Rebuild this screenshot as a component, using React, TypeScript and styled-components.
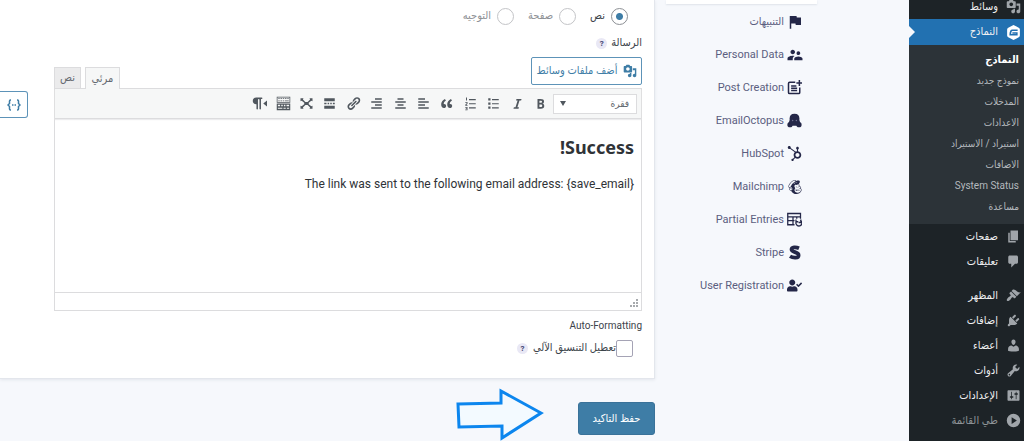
import React from 'react';
import styled, { createGlobalStyle, css } from 'styled-components';
import { MdFlag, MdSupervisorAccount } from 'react-icons/md';
import { FaHubspot, FaMailchimp, FaUserCheck } from 'react-icons/fa';

const Global = createGlobalStyle`
  * { box-sizing: border-box; }
  body {
    margin: 0;
    background: #f6f8fc;
    color: #3c434a;
    font-family: Roboto, 'DejaVu Sans Condensed', 'DejaVu Sans', sans-serif;
    font-size: 11px;
    line-height: 16px;
    overflow: hidden;
  }
  button, select, input { font: inherit; color: inherit; margin: 0; }
  ul { list-style: none; margin: 0; padding: 0; }
`;

const Page = styled.div`
  display: flex;
  align-items: stretch;
  min-height: 100vh;
  overflow: hidden;
`;

/* ---------- admin menu ---------- */
const AdminMenu = styled.nav`
  flex: 0 0 115px;
  background: #1d2327;
`;
const MenuList = styled.ul`
  margin-top: -6px;
`;
const MenuLink = styled.a<{ $active?: boolean; $muted?: boolean }>`
  position: relative;
  display: flex;
  align-items: center;
  gap: 8px;
  height: 25px;
  padding-right: 3px;
  color: ${p => (p.$muted ? '#8f9498' : '#f0f0f1')};
  text-decoration: none;
  svg { color: #a0a5aa; }
  ${p => p.$active && css`
    height: 26px;
    background: #2271b1;
    svg { color: #fff; }
    &::after {
      content: '';
      position: absolute;
      left: 0;
      top: 7px;
      border: 6px solid transparent;
      border-left-color: #f6f8fc;
      border-right-width: 0;
    }
  `}
`;
const Separator = styled.li`
  height: 9px;
`;
const SubMenu = styled.ul`
  background: #2c3338;
  padding: 4px 0 7px;
`;
const SubLink = styled.a<{ $current?: boolean }>`
  display: flex;
  align-items: center;
  height: 21px;
  padding-right: 5px;
  color: ${p => (p.$current ? '#fff' : '#b4b9be')};
  font-size: ${p => (p.$current ? '11px' : '10px')};
  font-weight: ${p => (p.$current ? 700 : 400)};
  text-decoration: none;
`;

/* ---------- settings tabs ---------- */
const Settings = styled.aside`
  flex: 0 0 254px;
  padding: 0 92px 0 11px;
`;
const SettingsPanel = styled.div`
  height: 4px;
  margin-bottom: 1px;
  background: #fff;
  box-shadow: 0 1px 2px #dfe3ea;
`;
const SettingsLink = styled.a`
  display: flex;
  align-items: center;
  gap: 3px;
  height: 33px;
  padding-right: 15px;
  color: #5b5e80;
  font-size: 11px;
  text-decoration: none;
  white-space: nowrap;
`;
const SettingsIcon = styled.span`
  display: flex;
  align-items: center;
  justify-content: center;
  width: 15px;
  height: 18px;
  color: #242748;
  svg { flex: none; }
`;

/* ---------- content ---------- */
const Content = styled.main`
  flex: 1;
  min-width: 0;
`;
const Card = styled.section`
  padding: 7px 12px 21px 0;
  background: #fff;
  border: solid #e3e6ec;
  border-width: 0 1px 1px 0;
  box-shadow: 0 1px 3px #e3e6ec;
`;
const RadioRow = styled.div`
  display: flex;
  align-items: center;
  gap: 14px;
  height: 18px;
  padding-right: 14px;
`;
const RadioLabel = styled.label<{ $on?: boolean }>`
  display: flex;
  align-items: center;
  gap: 6px;
  color: ${p => (p.$on ? '#3c434a' : '#8e9196')};
`;
const Radio = styled.input`
  appearance: none;
  width: 17px;
  height: 17px;
  border: 1px solid #c3c4c7;
  border-radius: 50%;
  background: #fff;
  &:checked {
    border-color: #8c8f94;
    background: radial-gradient(circle, #3e7da6 3px, #fff 4px);
  }
`;
const FieldTitle = styled.div`
  display: flex;
  align-items: center;
  gap: 4px;
  height: 16px;
  margin-top: 10px;
`;
const Help = styled.button`
  width: 11px;
  height: 11px;
  padding: 0;
  border: 0;
  border-radius: 50%;
  background: #e9e8f5;
  color: #3f4270;
  font-size: 8px;
  font-weight: 700;
  line-height: 11px;
`;
const EditorRow = styled.div`
  display: flex;
  align-items: flex-start;
  gap: 26px;
  margin-top: 6px;
`;
const EditorWrap = styled.div`
  flex: 1;
  min-width: 0;
`;
const EditorTop = styled.div`
  display: flex;
  justify-content: space-between;
  align-items: flex-end;
  height: 31px;
`;
const MediaButton = styled.button`
  display: flex;
  align-items: center;
  justify-content: center;
  gap: 5px;
  width: 111px;
  height: 28px;
  margin-bottom: 3px;
  padding: 0;
  border: 1px solid #5d93b8;
  border-radius: 2px;
  background: #fff;
  color: #3e7da6;
  white-space: nowrap;
`;
const Tabs = styled.div`
  display: flex;
  gap: 4px;
`;
const Tab = styled.button<{ $on?: boolean; $width: number }>`
  position: relative;
  width: ${p => p.$width}px;
  height: ${p => (p.$on ? 22 : 21)}px;
  margin-bottom: ${p => (p.$on ? -1 : 0)}px;
  padding: 0;
  border: 1px solid #dcdcde;
  border-bottom: 0;
  background: ${p => (p.$on ? '#f6f7f7' : '#ebebec')};
  color: #646970;
`;
const Editor = styled.div`
  border: 1px solid #dcdcde;
`;
const Toolbar = styled.div`
  display: flex;
  align-items: center;
  height: 30px;
  padding-right: 4px;
  border-bottom: 1px solid #dcdcde;
  background: #f6f7f7;
  box-shadow: 0 1px 1px #ececee;
`;
const FormatBox = styled.div`
  position: relative;
  width: 84px;
  height: 20px;
  margin-left: 1px;
  svg { position: absolute; left: 7px; top: 7px; }
`;
const FormatSelect = styled.select`
  appearance: none;
  width: 100%;
  height: 100%;
  padding: 0 7px;
  border: 1px solid #dcdcde;
  border-radius: 0;
  background: #fff;
  color: #646970;
  font-size: 10px;
`;
const ToolGroup = styled.div`
  display: flex;
  justify-content: space-between;
  width: 304px;
`;
const ToolButton = styled.button`
  display: grid;
  place-items: center;
  width: 23px;
  height: 23px;
  padding: 0;
  border: 0;
  background: none;
  color: #50575e;
`;
const Body = styled.div`
  min-height: 173px;
  padding: 16px 7px;
  color: #2f3337;
  h2 {
    margin: 0;
    font-family: 'Noto Sans', 'DejaVu Sans Condensed', sans-serif;
    font-size: 18px;
    line-height: 24px;
  }
  p { margin: 16px 0 0; font-size: 12px; line-height: 18px; text-align: right; }
`;
const StatusBar = styled.div`
  display: flex;
  justify-content: flex-end;
  align-items: flex-end;
  height: 18px;
  padding: 2px;
  border-top: 1px solid #dcdcde;
  direction: ltr;
`;
const MergeButton = styled.button`
  display: grid;
  place-items: center;
  width: 28px;
  height: 27px;
  margin-top: 34px;
  padding: 0;
  border: 1px solid #5d93b8;
  border-left: 0;
  border-radius: 0 3px 3px 0;
  background: #fff;
  color: #3e7da6;
`;
const FormatTitle = styled.div`
  margin-top: 7px;
  font-size: 10px;
`;
const CheckRow = styled.div`
  display: flex;
  align-items: center;
  gap: 5px;
  height: 18px;
  margin-top: 5px;
  padding-right: 9px;
`;
const CheckLabel = styled.label`
  display: flex;
  align-items: center;
`;
const CheckBox = styled.input`
  appearance: none;
  width: 17px;
  height: 17px;
  border: 1px solid #a5a3b5;
  border-radius: 2px;
  background: #fff;
`;
const Actions = styled.div`
  display: flex;
  align-items: flex-start;
  gap: 34px;
  padding-top: 9px;
`;
const Save = styled.button`
  width: 77px;
  height: 33px;
  margin-top: 14px;
  padding: 0;
  border: 1px solid #3a7299;
  border-radius: 3px;
  background: #3e7da6;
  color: #fff;
`;

/* ---------- icons ---------- */
const Dash = ({ d, size = 14 }: { d: string; size?: number }) => (
  <svg width={size} height={size} viewBox="0 0 20 20" fill="currentColor" fillRule="evenodd" aria-hidden="true">
    <path d={d} />
  </svg>
);

const icons = {
  media: 'M13 11V4c0-.55-.45-1-1-1h-1.67L9 1H5L3.67 3H2c-.55 0-1 .45-1 1v7c0 .55.45 1 1 1h10c.55 0 1-.45 1-1zM7 4.5c1.38 0 2.5 1.12 2.5 2.5S8.38 9.5 7 9.5 4.5 8.38 4.5 7 5.62 4.5 7 4.5zM14 6h5v10.5c0 1.38-1.12 2.5-2.5 2.5S14 17.88 14 16.5s1.12-2.5 2.5-2.5c.17 0 .34.02.5.05V9h-3V6zm-4 8.05V13h2v3.5c0 1.38-1.12 2.5-2.5 2.5S7 17.88 7 16.5 8.12 14 9.5 14c.17 0 .34.02.5.05z',
  form: 'M10 0l7 3.6q1.500.8 1.500 2.400v8q0 1.600-1.500 2.400L10 20l-7-3.600q-1.500-.8-1.500-2.400V6q0-1.600 1.500-2.400zM8.500 6Q6.500 6 5.600 7.500 4.500 9.500 4.500 14H15.500V9.500H8.500v2H13.500V12H6.800Q7 8 8.500 8H15.500V6z',
  pages: 'M6 15V2h10v13H6zm-1 1h8v2H3V5h2v11z',
  comments: 'M5 2h9c1.100 0 2 .9 2 2v7c0 1.100-.9 2-2 2h-2l-5 5v-5H5c-1.100 0-2-.9-2-2V4c0-1.100.9-2 2-2z',
  appearance: 'M14.480 11.060L7.410 3.990l1.500-1.500c.5-.56 2.300-.47 3.510.32 1.210.8 1.430 1.280 2.910 2.100 1.180.64 2.450 1.260 4.450.85zm-.71.71L6.700 4.700 4.930 6.470c-.39.39-.39 1.020 0 1.410l1.060 1.060c.39.39.39 1.030 0 1.420-.6.6-1.430 1.110-2.210 1.690-.35.26-.7.53-1.010.84C1.430 14.230.4 16.080 1.400 17.070c.99 1 2.840-.03 4.180-1.360.31-.31.58-.66.85-1.020.57-.78 1.080-1.610 1.690-2.210.39-.39 1.020-.39 1.410 0l1.060 1.060c.39.39 1.020.39 1.410 0z',
  plugins: 'M13.110 4.360L9.870 7.600 8 5.730l3.240-3.240c.35-.34 1.050-.2 1.560.32.52.51.66 1.210.31 1.550zm-8 1.770l.91-1.120 9.010 9.010-1.190.84c-.71.71-2.630 1.160-3.820 1.160H6.140L4.900 17.260c-.59.59-1.540.59-2.120 0-.59-.58-.59-1.530 0-2.120l1.240-1.240v-3.880c0-1.130.4-3.190 1.090-3.890zm7.260 3.970l3.240-3.240c.34-.35 1.040-.21 1.550.31.52.51.66 1.210.31 1.550l-3.240 3.250z',
  users: 'M10 9.250c-2.270 0-2.730-3.440-2.730-3.440C7 4.020 7.820 2 9.970 2c2.160 0 2.980 2.020 2.710 3.810 0 0-.41 3.440-2.680 3.440zm0 2.570L12.720 10c2.390 0 4.520 2.330 4.520 4.530v2.490s-3.650 1.130-7.240 1.130c-3.650 0-7.240-1.130-7.240-1.130v-2.490c0-2.250 1.940-4.480 4.470-4.480z',
  tools: 'M16.680 9.770c-1.340 1.340-3.300 1.670-4.950.99l-5.410 6.520c-.99.99-2.590.99-3.580 0s-.99-2.590 0-3.570l6.520-5.420c-.68-1.650-.35-3.610.99-4.950 1.280-1.280 3.120-1.620 4.720-1.060l-2.890 2.890 2.820 2.820 2.860-2.870c.53 1.580.18 3.390-1.080 4.650zM3.810 16.210c.4.39 1.040.39 1.430 0 .4-.4.4-1.040 0-1.430-.39-.4-1.030-.4-1.430 0-.39.39-.39 1.030 0 1.430z',
  settings: 'M18 16V4c0-.55-.45-1-1-1H3c-.55 0-1 .45-1 1v12c0 .55.45 1 1 1h14c.55 0 1-.45 1-1zM8 11h1c.55 0 1 .45 1 1s-.45 1-1 1H8v1.500c0 .28-.22.5-.5.5s-.5-.22-.5-.5V13H6c-.55 0-1-.45-1-1s.45-1 1-1h1V5.500c0-.28.22-.5.5-.5s.5.22.5.5V11zm5-2h-1c-.55 0-1-.45-1-1s.45-1 1-1h1V5.500c0-.28.22-.5.5-.5s.5.22.5.5V7h1c.55 0 1 .45 1 1s-.45 1-1 1h-1v5.500c0 .28-.22.5-.5.5s-.5-.22-.5-.5V9z',
  collapse: 'M10 1a9 9 0 1 0 0 18a9 9 0 0 0 0-18zM7.500 5.500L14.500 10L7.500 14.500z',
};

const toolIcons: [string, string][] = [
  ['عريض', 'M6 4v13h4.540c1.370 0 2.460-.33 3.260-1 .8-.66 1.200-1.580 1.200-2.770 0-.84-.17-1.510-.51-2.010s-.9-.85-1.670-1.030v-.09c.57-.1 1.020-.4 1.360-.9s.51-1.130.51-1.910c0-1.140-.39-1.980-1.170-2.500C12.750 4.260 11.500 4 9.780 4H6zm2.570 5.150V6.260h1.360c.73 0 1.270.11 1.610.32.34.22.51.58.51 1.070 0 .54-.16.92-.47 1.150s-.82.35-1.510.35h-1.500zm0 2.190h1.600c1.440 0 2.160.53 2.160 1.610 0 .6-.17 1.050-.51 1.340s-.86.43-1.570.43H8.570v-3.380z'],
  ['مائل', 'M14.780 6h-2.130l-2.800 9h2.120l-.62 2H4.600l.62-2h2.140l2.800-9H8.030l.62-2h6.750z'],
  ['قائمة نقطية', 'M3 3h3v3H3zM8 4h9v1.500H8zM3 8.500h3v3H3zM8 9.500h9V11H8zM3 14h3v3H3zM8 15h9v1.500H8z'],
  ['قائمة رقمية', 'M4 2h1.300v4H4zM3 8h3v2.200L4.500 12H6v1H3v-1.200L5 9.500V9H3zM3 14.500h3V19H3v-1h2v-.8H3.700v-1H5v-.7H3zM8 4h9v1.500H8zM8 9.500h9V11H8zM8 15h9v1.500H8z'],
  ['اقتباس', 'M9.490 13.220c0-.74-.2-1.380-.61-1.900-.62-.78-1.830-.88-2.530-.72-.29-1.650 1.110-3.750 2.920-4.650L7.880 4c-2.730 1.300-5.420 4.280-4.960 8.050C3.210 14.430 4.590 16 6.540 16c.85 0 1.560-.25 2.120-.75s.83-1.180.83-2.030zm8.050 0c0-.74-.2-1.380-.61-1.900-.63-.78-1.830-.88-2.530-.72-.29-1.650 1.110-3.750 2.920-4.650L15.930 4c-2.730 1.300-5.410 4.280-4.950 8.050.29 2.380 1.660 3.950 3.610 3.950.85 0 1.560-.25 2.120-.75s.83-1.180.83-2.030z'],
  ['محاذاة لليسار', 'M12 5V3H3v2h9zm5 4V7H3v2h14zm-5 4v-2H3v2h9zm5 4v-2H3v2h14z'],
  ['توسيط', 'M14 5V3H6v2h8zm3 4V7H3v2h14zm-3 4v-2H6v2h8zm3 4v-2H3v2h14z'],
  ['محاذاة لليمين', 'M17 5V3H8v2h9zm0 4V7H3v2h14zm0 4v-2H8v2h9zm0 4v-2H3v2h14z'],
  ['رابط', 'M17.740 2.760c1.680 1.690 1.680 4.410 0 6.100l-1.530 1.520c-1.120 1.120-2.700 1.470-4.140 1.090l2.620-2.610.76-.77.76-.76c.84-.84.84-2.200 0-3.040-.84-.85-2.200-.85-3.040 0l-.77.76-3.380 3.380c-.37-1.440-.02-3.020 1.100-4.140l1.520-1.530c1.690-1.680 4.420-1.680 6.100 0zM8.590 13.430l5.340-5.340c.42-.42.42-1.100 0-1.520-.44-.43-1.130-.39-1.530 0l-5.330 5.340c-.42.42-.42 1.100 0 1.520.44.43 1.130.39 1.520 0zm-.76 2.290l4.140-4.150c.38 1.440.03 3.020-1.090 4.140l-1.520 1.530c-1.690 1.680-4.410 1.680-6.100 0-1.680-1.680-1.680-4.420 0-6.100l1.530-1.520c1.120-1.120 2.700-1.470 4.140-1.100l-4.140 4.150c-.85.84-.85 2.200 0 3.050.84.84 2.200.84 3.040 0z'],
  ['اقرأ المزيد', 'M17 7V3H3v4h14zM6 11V9H3v2h3zm3.500 0V9h-2v2h2zm3.500 0V9h-2v2h2zm4 0V9h-2.500v2H17zm0 6v-4H3v4h14z'],
  ['ملء الشاشة', 'M2 3h4L5.200 4.600 8.500 8h3L14.800 4.600 14 3h4v4l-1.600-.8L13 9v2l3.400 2.800L18 13v4h-4l.8-1.600L11.500 12h-3l-3.300 3.400L6 17H2v-4l1.600.8L7 11V9L3.600 6.200 2 7z'],
  ['شريط الأدوات', 'M1 1h18v8H1zM2 2v6h16V2zM3 3h2v1H3zm3 0h2v1H6zm3 0h2v1H9zm3 0h2v1h-2zm3 0h2v1h-2zM3 6h2v1H3zm3 0h2v1H6zm3 0h2v1H9zm3 0h5v1h-5zM1 10h18v9H1zM2.500 11.500v2h3v-2zm4.500 0v2h2v-2zm3.500 0v2h2v-2zm3.500 0v2h3.500v-2zM2.500 15.500v1.500h6v-1.500zm7.500 0v1.500h3v-1.500zm4.500 0v1.500h3v-1.500z'],
  ['اتجاه النص', 'M5.520 2h7.430c.55 0 1 .45 1 1s-.45 1-1 1h-1v13c0 .55-.45 1-1 1s-1-.45-1-1V5c0-.55-.45-1-1-1s-1 .45-1 1v12c0 .55-.45 1-1 1s-1-.45-1-1v-5.960h-.43C3.020 11.040 1 9.020 1 6.520S3.020 2 5.520 2zM20 6l-5 4 5 4V6z'],
];

const PostIcon = () => (
  <svg width="15" height="15" viewBox="0 0 20 20" fill="none" stroke="currentColor" strokeWidth="2" aria-hidden="true">
    <path d="M11 3H3.500Q2 3 2 4.500v12Q2 18 3.500 18h12q1.500 0 1.500-1.500V10" />
    <path d="M5.500 8h7M5.500 11h8M5.500 14h8M16.500 0v8M12.500 4h8" />
  </svg>
);
const OctopusIcon = () => (
  <svg width="15" height="15" viewBox="0 0 20 20" fill="currentColor" aria-hidden="true">
    <path d="M10 1C5.500 1 3.500 3.500 3.500 7v5h13V7c0-3.500-2-6-6.500-6z" />
    <path d="M3.500 10h13l1.500 4H2z" />
    <circle cx="4" cy="15.500" r="3.500" /><circle cx="16" cy="15.500" r="3.500" />
    <path d="M6 12h8v5H6z" />
    <circle cx="7.500" cy="10" r="1" fill="#6f7190" /><circle cx="12.500" cy="10" r="1" fill="#6f7190" />
  </svg>
);
const EntriesIcon = () => (
  <svg width="15" height="15" viewBox="0 0 20 20" fill="none" stroke="currentColor" strokeWidth="1.700" aria-hidden="true">
    <path d="M10 17H1V2h17v7M1 6.500h17M1 11.500h9M8 6.500V17M13 6.500V9M17.500 11a4 4 0 1 1-5 1.500M12 10v3h3M18.500 10v4h-3" />
  </svg>
);
const StripeIcon = () => (
  <svg width="15" height="15" viewBox="0 0 20 20" fill="none" stroke="currentColor" strokeWidth="5" aria-hidden="true">
    <path d="M16 4.200C12 2.500 6 2.300 6 6c0 4 9.500 3 9.500 7.500 0 4.500-7.500 4-11.500 1.500" />
  </svg>
);
const MergeIcon = () => (
  <svg width="14" height="12" viewBox="0 0 14 12" fill="none" stroke="currentColor" strokeWidth="1.500" aria-hidden="true">
    <path d="M4 1H3.500Q2.500 1 2.500 2v2.500L1 6l1.500 1.500V10q0 1 1 1H4M10 1h.5q1 0 1 1v2.500L13 6l-1.500 1.500V10q0 1-1 1H10M5 6h1.500M7.500 6H9" />
  </svg>
);

const before: [string, string][] = [['وسائط', icons.media]];
const contentMenu: [string, string][] = [['صفحات', icons.pages], ['تعليقات', icons.comments]];
const siteMenu: [string, string][] = [
  ['المظهر', icons.appearance], ['إضافات', icons.plugins], ['أعضاء', icons.users],
  ['أدوات', icons.tools], ['الإعدادات', icons.settings],
];
const subMenu = ['النماذج', 'نموذج جديد', 'المدخلات', 'الاعدادات', 'استيراد / الاستيراد', 'الاضافات', 'System Status', 'مساعدة'];

const settings: [string, React.ReactNode][] = [
  ['التنبيهات', <MdFlag size={18} />],
  ['Personal Data', <MdSupervisorAccount size={18} />],
  ['Post Creation', <PostIcon />],
  ['EmailOctopus', <OctopusIcon />],
  ['HubSpot', <FaHubspot size={15} />],
  ['Mailchimp', <FaMailchimp size={16} />],
  ['Partial Entries', <EntriesIcon />],
  ['Stripe', <StripeIcon />],
  ['User Registration', <FaUserCheck size={15} />],
];

const MenuItems = ({ items }: { items: [string, string][] }) => (
  <>
    {items.map(([label, d]) => (
      <li key={label}><MenuLink href="#"><Dash d={d} size={15} />{label}</MenuLink></li>
    ))}
  </>
);

export default function App() {
  return (
    <>
      <Global />
      <Page dir="rtl" lang="ar">
        <AdminMenu>
          <MenuList>
            <MenuItems items={before} />
            <li>
              <MenuLink href="#" $active><Dash d={icons.form} size={15} />النماذج</MenuLink>
              <SubMenu>
                {subMenu.map((label, i) => (
                  <li key={label}><SubLink href="#" $current={i === 0}>{label}</SubLink></li>
                ))}
              </SubMenu>
            </li>
            <MenuItems items={contentMenu} />
            <Separator />
            <MenuItems items={siteMenu} />
            <li><MenuLink href="#" $muted><Dash d={icons.collapse} size={15} />طي القائمة</MenuLink></li>
          </MenuList>
        </AdminMenu>

        <Settings>
          <SettingsPanel />
          {settings.map(([label, icon]) => (
            <SettingsLink href="#" key={label}><SettingsIcon>{icon}</SettingsIcon>{label}</SettingsLink>
          ))}
        </Settings>

        <Content>
          <Card>
            <RadioRow>
              <RadioLabel $on><Radio type="radio" name="type" defaultChecked />نص</RadioLabel>
              <RadioLabel><Radio type="radio" name="type" />صفحة</RadioLabel>
              <RadioLabel><Radio type="radio" name="type" />التوجيه</RadioLabel>
            </RadioRow>
            <FieldTitle>الرسالة <Help type="button">?</Help></FieldTitle>
            <EditorRow>
              <EditorWrap>
                <EditorTop>
                  <MediaButton type="button"><Dash d={icons.media} />أضف ملفات وسائط</MediaButton>
                  <Tabs>
                    <Tab type="button" $on $width={35}>مرئي</Tab>
                    <Tab type="button" $width={27}>نص</Tab>
                  </Tabs>
                </EditorTop>
                <Editor>
                  <Toolbar>
                    <FormatBox>
                      <FormatSelect aria-label="تنسيق"><option>فقرة</option></FormatSelect>
                      <svg width="6" height="5" viewBox="0 0 6 5" aria-hidden="true"><path d="M0 0h6L3 5z" fill="#50575e" /></svg>
                    </FormatBox>
                    <ToolGroup>
                      {toolIcons.map(([label, d]) => (
                        <ToolButton type="button" key={label} aria-label={label}><Dash d={d} size={15} /></ToolButton>
                      ))}
                    </ToolGroup>
                  </Toolbar>
                  <Body>
                    <h2>Success!</h2>
                    <p dir="ltr">The link was sent to the following email address: {'{save_email}'}</p>
                  </Body>
                  <StatusBar>
                    <svg width="9" height="9" viewBox="0 0 9 9" fill="#a7aaad" aria-hidden="true">
                      <path d="M6 0h2v2H6zM3 3h2v2H3zM6 3h2v2H6zM0 6h2v2H0zM3 6h2v2H3zM6 6h2v2H6z" />
                    </svg>
                  </StatusBar>
                </Editor>
              </EditorWrap>
              <MergeButton type="button" aria-label="وسوم الدمج"><MergeIcon /></MergeButton>
            </EditorRow>
            <FormatTitle>Auto-Formatting</FormatTitle>
            <CheckRow>
              <CheckLabel><CheckBox type="checkbox" />تعطيل التنسيق الآلي</CheckLabel>
              <Help type="button">?</Help>
            </CheckRow>
          </Card>
          <Actions>
            <Save type="button">حفظ التاكيد</Save>
            <svg width="88" height="53" viewBox="0 0 88 53" aria-hidden="true">
              <path d="M2 16L45 15V3L85 25L46 50V38L3 39Z" fill="#f3faff" stroke="#0c86ee" strokeWidth="3" />
            </svg>
          </Actions>
        </Content>
      </Page>
    </>
  );
}
